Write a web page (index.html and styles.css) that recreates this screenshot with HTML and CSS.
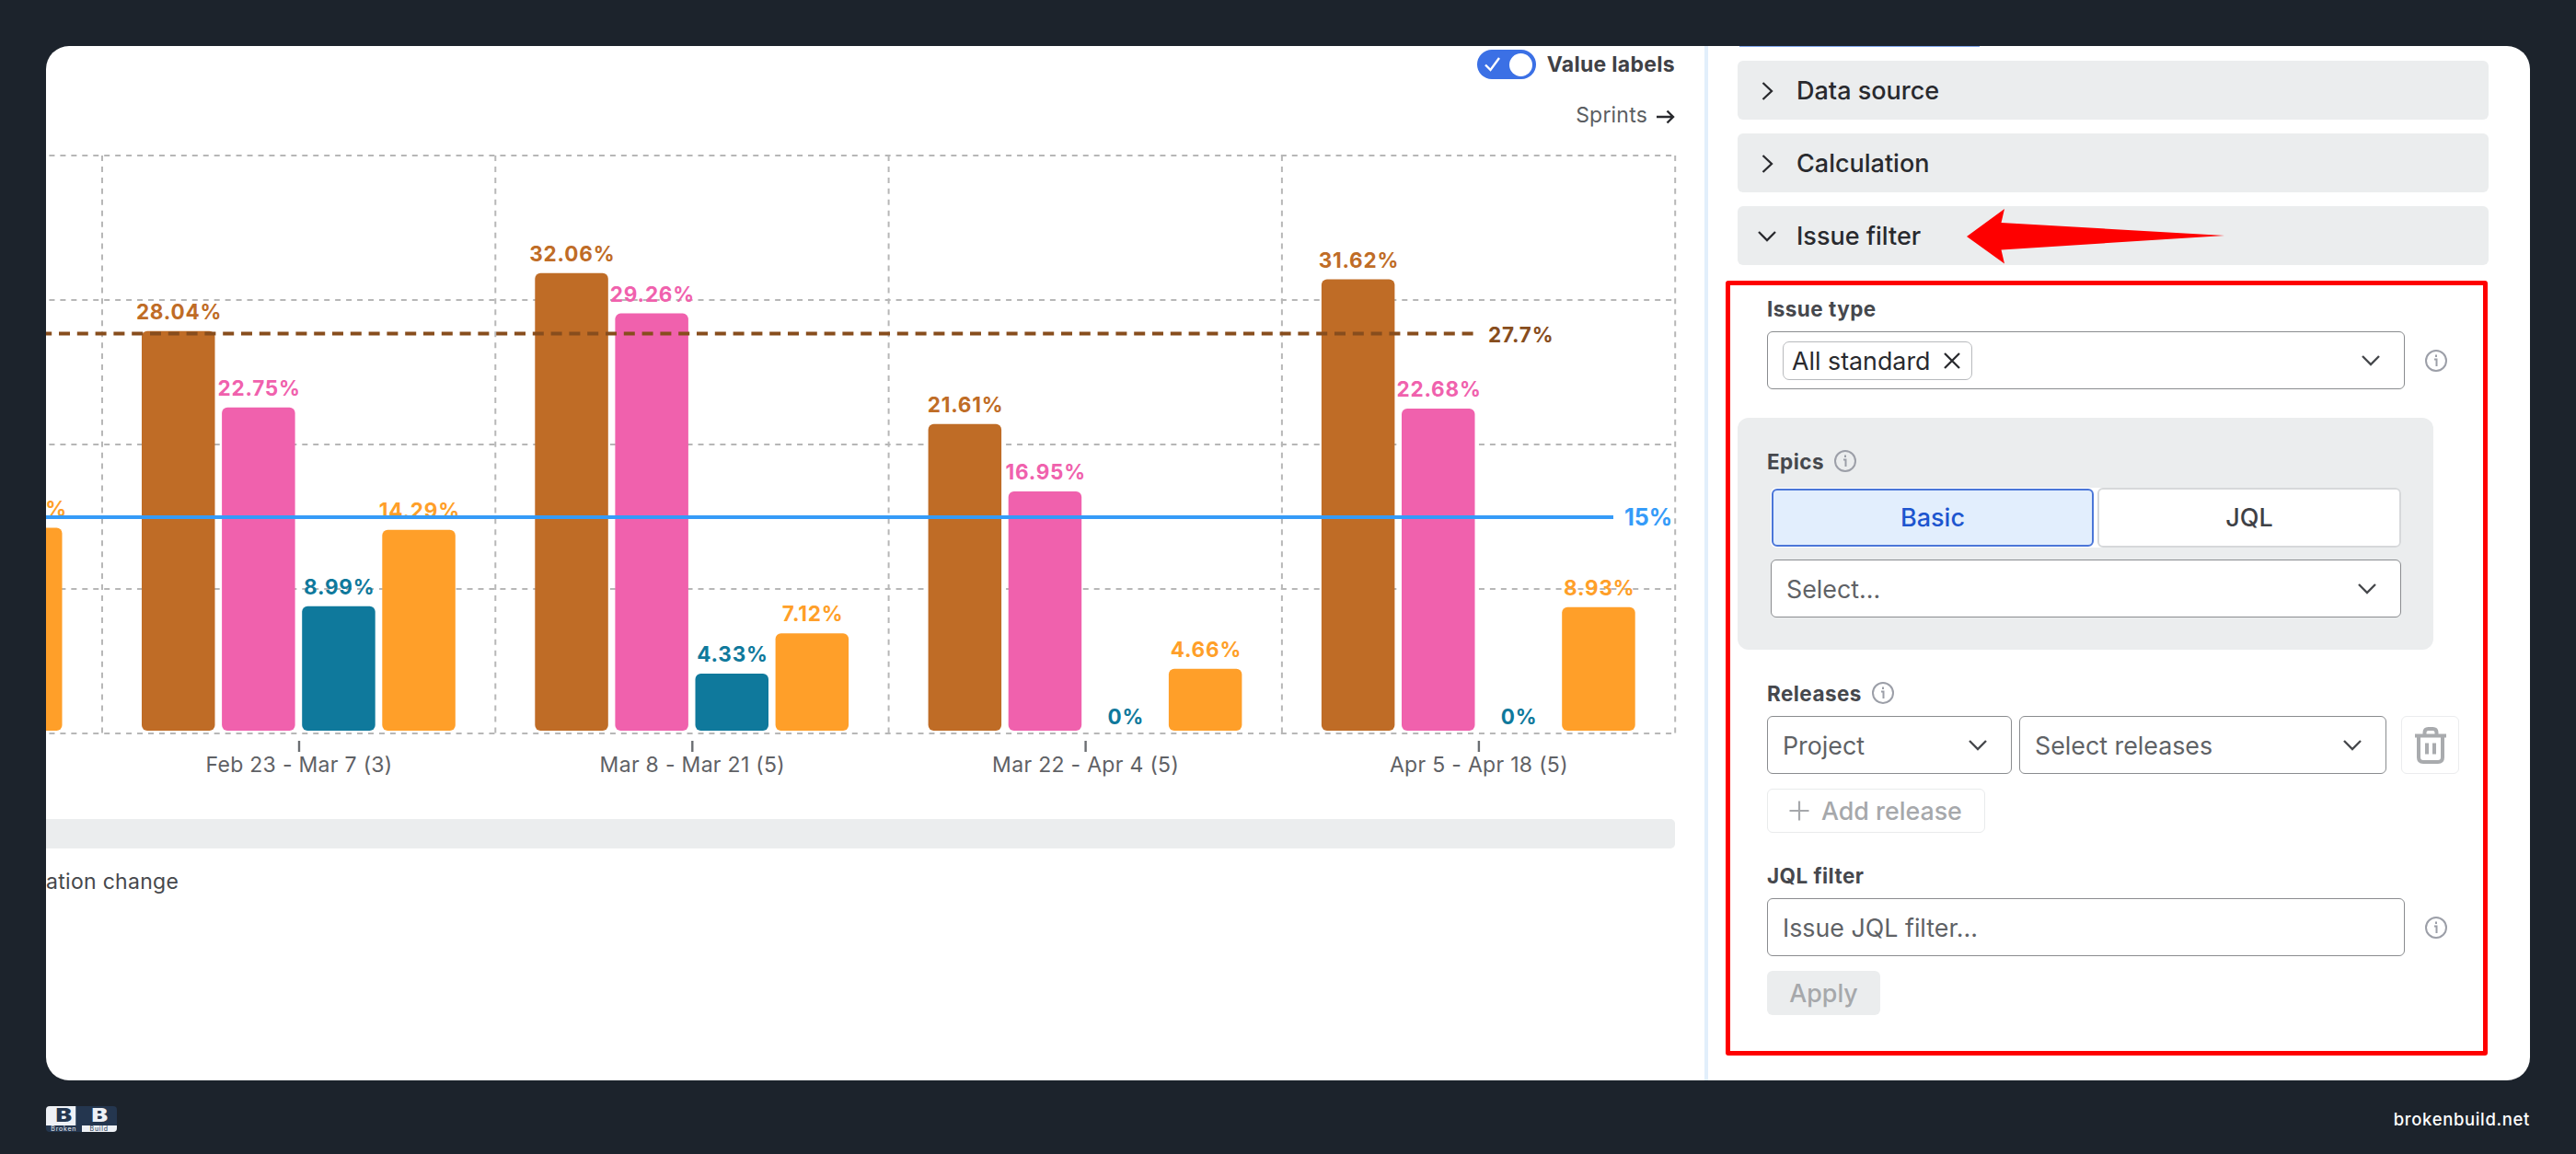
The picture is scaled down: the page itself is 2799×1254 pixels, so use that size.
FILE: index.html
```html
<!DOCTYPE html>
<html lang="en">
  <head>
    <meta charset="UTF-8" />
    <title>Issue filter</title>
    <link rel="stylesheet" href="styles.css">
  </head>
  <body>
    <main class="card">
      <section class="report">
        <div class="toggleRow">
          <span class="toggle">
            <svg width="20" height="18" viewBox="0 0 20 18"><path d="M2 9.5 L7.5 15 L17 2" /></svg>
            <span class="knob"></span>
          </span>
          <span class="toggleText">Value labels</span>
        </div>
        <div class="sprintsRow">
          <span class="sprints">Sprints</span>
          <svg class="arrowIcon" width="20" height="18" viewBox="0 0 20 18"><path d="M0 9 H18 M11.5 2.5 L18 9 L11.5 15.5" /></svg>
        </div>
        <svg id="chart" width="1802" height="731" viewBox="0 0 1802 731"></svg>
        <div class="scrollbar"></div>
        <div class="legend">ation change</div>
      </section>

      <aside class="settings">
        <div class="prevTab"></div>
        <div class="section">
          <svg class="icon" width="20" height="20" viewBox="0 0 20 20"><path d="M5.5 1 L15 10 L5.5 19" /></svg>
          <span>Data source</span>
        </div>
        <div class="section">
          <svg class="icon" width="20" height="20" viewBox="0 0 20 20"><path d="M5.5 1 L15 10 L5.5 19" /></svg>
          <span>Calculation</span>
        </div>
        <div class="section">
          <svg class="icon" width="20" height="20" viewBox="0 0 20 20"><path d="M1 5 L10 14 L19 5" /></svg>
          <span>Issue filter</span>
          <svg class="pointer" width="280" height="60" viewBox="0 0 280 60"><path d="M0 30 L41 0 L37.5 15 L280 29 L37.5 44.5 L41 59.5 Z" /></svg>
        </div>

        <div class="filters">
          <div class="label first"><span>Issue type</span></div>
          <div class="row">
            <div class="select wide">
              <span class="tag"><span>All standard</span>
                <svg class="icon" width="18" height="18" viewBox="0 0 18 18"><path d="M1 1 L17 17 M17 1 L1 17" /></svg>
              </span>
              <svg class="chevron" width="20" height="12" viewBox="0 0 20 12"><path d="M1 1 L10 10 L19 1" /></svg>
            </div>
            <svg class="info" width="26" height="26" viewBox="0 0 26 26"><circle cx="13" cy="13" r="11" /><path d="M11 11.5 H13.5 V19 M13 6.5 V9" /></svg>
          </div>

          <div class="epics">
            <div class="label"><span>Epics</span>
              <svg class="info" width="26" height="26" viewBox="0 0 26 26"><circle cx="13" cy="13" r="11" /><path d="M11 11.5 H13.5 V19 M13 6.5 V9" /></svg>
            </div>
            <div class="tabs">
              <div class="tab active"><span>Basic</span></div>
              <div class="tab"><span>JQL</span></div>
            </div>
            <div class="select">
              <span>Select...</span>
              <svg class="chevron" width="20" height="12" viewBox="0 0 20 12"><path d="M1 1 L10 10 L19 1" /></svg>
            </div>
          </div>

          <div class="label"><span>Releases</span>
            <svg class="info" width="26" height="26" viewBox="0 0 26 26"><circle cx="13" cy="13" r="11" /><path d="M11 11.5 H13.5 V19 M13 6.5 V9" /></svg>
          </div>
          <div class="row">
            <div class="select project">
              <span>Project</span>
              <svg class="chevron" width="20" height="12" viewBox="0 0 20 12"><path d="M1 1 L10 10 L19 1" /></svg>
            </div>
            <div class="select releases">
              <span>Select releases</span>
              <svg class="chevron" width="20" height="12" viewBox="0 0 20 12"><path d="M1 1 L10 10 L19 1" /></svg>
            </div>
            <div class="deleteBtn">
              <svg width="36" height="40" viewBox="0 0 36 40"><path d="M1 9.5 H35 M11.5 9 V6 Q11.5 2 15.5 2 H20.5 Q24.5 2 24.5 6 V9 M5 10 V33 Q5 38 10 38 H26 Q31 38 31 33 V10 M14 17.5 V29.5 M22 17.5 V29.5" /></svg>
            </div>
          </div>
          <div class="addBtn">
            <svg width="22" height="22" viewBox="0 0 22 22"><path d="M0.5 11 H21.5 M11 0.5 V21.5" /></svg>
            <span>Add release</span>
          </div>

          <div class="label jql"><span>JQL filter</span></div>
          <div class="row">
            <div class="select wide"><span>Issue JQL filter...</span></div>
            <svg class="info" width="26" height="26" viewBox="0 0 26 26"><circle cx="13" cy="13" r="11" /><path d="M11 11.5 H13.5 V19 M13 6.5 V9" /></svg>
          </div>
          <div class="applyBtn"><span>Apply</span></div>
          <div class="highlight"></div>
        </div>
      </aside>
    </main>

    <footer>
      <div class="logo">
        <div class="half light"><b>B</b><small>Broken</small></div>
        <div class="half dark"><b>B</b><small>Build</small></div>
      </div>
      <span class="site">brokenbuild.net</span>
    </footer>

    <script>
      const sprints = [
        { name: '', values: [null, null, null, 14.42] },
        { name: 'Feb 23 - Mar 7 (3)', values: [28.04, 22.75, 8.99, 14.29] },
        { name: 'Mar 8 - Mar 21 (5)', values: [32.06, 29.26, 4.33, 7.12] },
        { name: 'Mar 22 - Apr 4 (5)', values: [21.61, 16.95, 0, 4.66] },
        { name: 'Apr 5 - Apr 18 (5)', values: [31.62, 22.68, 0, 8.93] },
      ];
      const colors = ['#bf6c26', '#f061ad', '#0f799c', '#ff9f29'];
      const zero = 658;
      const unit = 15.7;
      const step = 427.3;
      let out = '';

      // Grid
      for (let p = 0; p <= 40; p += 10) {
        const y = zero - p * unit;
        out += `<line class="grid" x1="-8.5" y1="${y}" x2="1770" y2="${y}" />`;
      }
      for (let i = 0; i <= 4; i++) {
        const x = 61 + i * step;
        out += `<line class="grid" x1="${x}" y1="30" x2="${x}" y2="${zero}" />`;
      }

      // Bars with value labels
      sprints.forEach((sprint, i) => {
        const left = 104 + (i - 1) * step;
        sprint.values.forEach((value, j) => {
          if (value === null) return;
          const x = left + j * 87.1;
          const top = zero - value * unit + 3;
          if (value > 0) {
            out += `<rect x="${x}" y="${top}" width="79.5" height="${zero - 3 - top}" rx="6" fill="${colors[j]}" />`;
          }
          const y = value > 0 ? top - 13 : zero - 10;
          out += `<text class="value" x="${x + 40.5}" y="${y}" fill="${colors[j]}">${value}%</text>`;
        });
        if (sprint.name) {
          const mid = left + 171;
          out += `<line class="tick" x1="${mid}" y1="666" x2="${mid}" y2="678" />`;
          out += `<text class="sprintName" x="${mid}" y="700">${sprint.name}</text>`;
        }
      });

      // Average and target lines
      out += '<line class="average" x1="-5.8" y1="223.5" x2="1552" y2="223.5" />';
      out += '<text class="averageText" x="1567" y="232.5">27.7%</text>';
      out += '<line class="target" x1="0" y1="423" x2="1703" y2="423" />';
      out += '<text class="targetText" x="1715" y="432">15%</text>';

      document.getElementById('chart').innerHTML = out;
    </script>
  </body>
</html>
```
FILE: styles.css
```css
* {
  box-sizing: border-box;
}

body {
  margin: 0;
  padding: 50px;
  width: 2799px;
  height: 1254px;
  overflow: hidden;
  background: #1c232c;
  font-family: Inter, "Liberation Sans", sans-serif;
  color: #292a2e;
}

svg {
  display: block;
  flex: none;
  fill: none;
}

.card {
  display: flex;
  width: 2699px;
  height: 1123.5px;
  background: #fff;
  border-radius: 25px;
  overflow: hidden;
}

/* Report side */
.report {
  width: 1802px;
  padding-top: 4px;
  overflow: hidden;
}

.toggleRow,
.sprintsRow {
  display: flex;
  justify-content: flex-end;
  align-items: center;
  padding-right: 32px;
}

.toggleRow {
  gap: 12px;
  height: 32px;
}

.toggle {
  display: flex;
  justify-content: space-between;
  align-items: center;
  width: 64px;
  height: 32px;
  padding: 0 4px 0 7px;
  background: #3b70e5;
  border-radius: 16px;
}

.toggle path {
  stroke: #fff;
  stroke-width: 2.4;
}

.knob {
  width: 25px;
  height: 25px;
  background: #fff;
  border-radius: 50%;
}

.toggleText {
  font-size: 23px;
  font-weight: 650;
  letter-spacing: 0.3px;
  color: #3f4146;
}

.sprintsRow {
  gap: 10px;
  height: 28px;
  margin-top: 25px;
}

.sprints {
  font-size: 23px;
  letter-spacing: 0.2px;
  color: #5b5e62;
}

.arrowIcon {
  margin-top: 3px;
}

.arrowIcon path {
  stroke: #292a2e;
  stroke-width: 2.4;
}

.grid {
  stroke: #b7b7b7;
  stroke-width: 2;
  stroke-dasharray: 6 5.95;
}

.value,
.averageText,
.targetText {
  font-size: 22.5px;
  font-weight: 650;
  letter-spacing: 0.8px;
}

.value,
.sprintName {
  text-anchor: middle;
}

.sprintName {
  font-size: 23px;
  letter-spacing: 0.3px;
  fill: #5f6165;
}

.tick {
  stroke: #6b6e72;
  stroke-width: 2.4;
}

.average {
  stroke: #874d1d;
  stroke-width: 4;
  stroke-dasharray: 12 7.8;
}

.averageText {
  fill: #874d1d;
}

.target {
  stroke: #359bf8;
  stroke-width: 4;
}

.targetText {
  font-size: 25px;
  font-weight: 700;
  letter-spacing: 0;
  fill: #359bf8;
}

.scrollbar {
  width: 1770px;
  height: 32px;
  margin-top: 20px;
  background: #ebedee;
  border-radius: 0 5px 5px 0;
}

.legend {
  margin-top: 22px;
  font-size: 23px;
  line-height: 28px;
  letter-spacing: 0.3px;
  color: #46484c;
}

/* Settings side */
.settings {
  position: relative;
  flex: 1;
  padding: 16px 45px 0 32px;
  border-left: 4px solid #e2effb;
}

.prevTab {
  position: absolute;
  top: 0;
  left: 34px;
  width: 261px;
  height: 1px;
  background: #7ea4ea;
}

.section {
  position: relative;
  display: flex;
  align-items: center;
  gap: 22px;
  height: 64px;
  margin-bottom: 15px;
  padding: 1px 0 0 22px;
  background: #ebedee;
  border-radius: 6px;
  font-size: 27px;
  font-weight: 500;
}

.icon path {
  stroke: #292a2e;
  stroke-width: 2.3;
}

.pointer {
  position: absolute;
  left: 249px;
  top: 3px;
}

.pointer path {
  fill: #fe0000;
}

.filters {
  position: relative;
  margin-top: -15px;
  padding: 33px 0 0 32px;
}

.highlight {
  position: absolute;
  top: 17px;
  left: -13px;
  width: 828px;
  height: 842px;
  border: 5px solid #fe0000;
  border-radius: 3px;
}

.label {
  display: flex;
  align-items: center;
  gap: 10px;
  height: 28px;
  margin: 33px 0 11px;
  font-size: 22.5px;
  font-weight: 650;
  letter-spacing: 0.45px;
  color: #46484d;
}

.label.first {
  margin-top: 0;
}

.row {
  display: flex;
  align-items: center;
}

.select {
  display: flex;
  justify-content: space-between;
  align-items: center;
  height: 63px;
  padding: 0 26px 0 16px;
  background: #fff;
  border: 1.6px solid #8a8c8f;
  border-radius: 6px;
  font-size: 26.8px;
  color: #5f6266;
}

.select.wide {
  width: 693px;
  margin-right: 21px;
}

.tag {
  display: flex;
  align-items: center;
  gap: 15px;
  height: 42px;
  padding: 0 12px 0 9px;
  border: 1.6px solid #b8babd;
  border-radius: 7px;
  color: #292a2e;
}

.chevron path {
  stroke: #46484c;
  stroke-width: 2.4;
}

.info circle,
.info path {
  stroke: #9c9fa8;
  stroke-width: 2;
}

.epics {
  width: 756px;
  height: 252px;
  margin: 31px 0 0 -32px;
  padding: 33px 35px 35px 36px;
  background: #ebedee;
  border-radius: 12px;
}

.epics .label {
  margin: 0 0 15px -4px;
}

.tabs {
  display: flex;
  gap: 4px;
  height: 65px;
  margin-bottom: 13px;
  background: #fff;
  border-radius: 6px;
}

.tab {
  display: flex;
  justify-content: center;
  align-items: center;
  width: 330px;
  border: 2px solid #d6d8da;
  border-radius: 6px;
  font-size: 27px;
  font-weight: 500;
  color: #3f4146;
}

.tab.active {
  width: 350px;
  margin: 1px 0 1px 1px;
  background: #e2eefd;
  border-color: #4b76d8;
  color: #1d55cf;
}

.project {
  width: 266px;
  margin-right: 8px;
}

.releases {
  width: 399px;
  margin-right: 16px;
}

.deleteBtn {
  display: flex;
  justify-content: center;
  align-items: center;
  width: 63px;
  height: 63px;
  border: 1.6px solid #ebecee;
  border-radius: 6px;
}

.deleteBtn path {
  stroke: #a9abae;
  stroke-width: 4;
}

.addBtn,
.applyBtn {
  display: flex;
  align-items: center;
  height: 48px;
  margin-top: 16px;
  border-radius: 6px;
  font-size: 26.8px;
  font-weight: 500;
  color: #a6a8ab;
}

.addBtn {
  gap: 13px;
  width: 237px;
  padding-left: 23px;
  border: 1.6px solid #e9ebec;
}

.addBtn path {
  stroke: #a6a8ab;
  stroke-width: 2.2;
}

.label.jql {
  margin-top: 32px;
}

.applyBtn {
  justify-content: center;
  width: 123px;
  background: #ebedee;
}

/* Footer */
footer {
  display: flex;
  justify-content: space-between;
  align-items: center;
  height: 28px;
  margin-top: 28px;
}

.logo {
  display: flex;
  width: 77px;
  height: 28px;
  border-radius: 4px;
  overflow: hidden;
}

.half {
  width: 50%;
  text-align: center;
}

.half b {
  display: block;
  height: 21px;
  font-size: 19.5px;
  font-weight: 900;
  line-height: 21px;
  transform: scaleX(1.35);
}

.half small {
  display: block;
  height: 7px;
  font-size: 7px;
  line-height: 7px;
  letter-spacing: 0.8px;
}

.light b,
.dark small {
  background: #eef1f6;
  color: #24364f;
}

.dark b,
.light small {
  background: #24364f;
  color: #eef1f6;
}

.site {
  font-size: 18.5px;
  font-weight: 500;
  letter-spacing: 0.65px;
  color: #fff;
}
```
